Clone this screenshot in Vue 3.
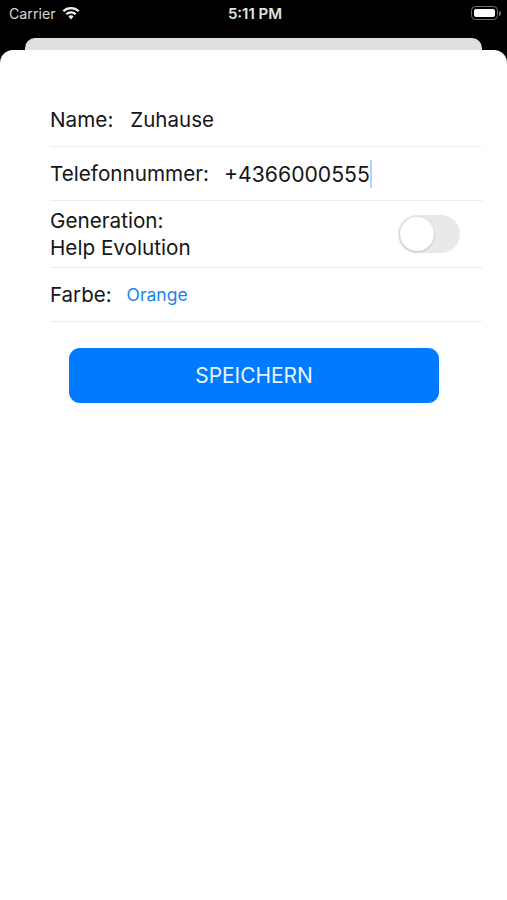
<script setup>
import { ref } from 'vue'
const rows = ref({ name: 'Zuhause', phone: '+4366000555', color: 'Orange' })
</script>

<template>
  <div class="screen">
    <header class="status">
      <div class="status-left">
        <span class="carrier">Carrier</span>
        <svg class="wifi" viewBox="0 0 18 14" width="18" height="14">
          <path d="M1.300 5.200a11 11 0 0 1 15.400 0" fill="none" stroke="#f2f2f2" stroke-width="2.200"/>
          <path d="M4.300 8.200a6.800 6.800 0 0 1 9.400 0" fill="none" stroke="#f2f2f2" stroke-width="2.200"/>
          <path d="M9 9.300c-1 0-1.900.4-2.600 1L9 13.400l2.600-3.100c-.7-.6-1.600-1-2.600-1z" fill="#f2f2f2"/>
        </svg>
      </div>
      <span class="time">5:11 PM</span>
      <div class="battery">
        <div class="battery-body"><div class="battery-fill"></div></div>
        <div class="battery-cap"></div>
      </div>
    </header>

    <div class="sheet-back"></div>

    <main class="sheet">
      <form class="form">
        <div class="row row-name">
          <span class="label">Name:</span>
          <span class="value value-name">{{ rows.name }}</span>
        </div>
        <div class="row row-phone">
          <span class="label">Telefonnummer:</span>
          <span class="value value-phone">{{ rows.phone }}<i class="caret"></i></span>
        </div>
        <div class="row row-toggle">
          <span class="label label-two">Generation:<br />Help Evolution</span>
          <div class="switch"><div class="knob"></div></div>
        </div>
        <div class="row row-color">
          <span class="label label-color">Farbe:</span>
          <span class="link">{{ rows.color }}</span>
        </div>
        <button class="save" type="button">SPEICHERN</button>
      </form>
    </main>
  </div>
</template>

<style>
html, body { margin: 0; background: #000; }
</style>

<style scoped>
.screen {
  width: 507px;
  height: 900px;
  background: #000;
  display: flex;
  flex-direction: column;
  overflow: hidden;
  font-family: Inter, "Liberation Sans", sans-serif;
  color: #111;
}
.status {
  height: 38px;
  flex: none;
  display: grid;
  grid-template-columns: 1fr auto 1fr;
  align-items: start;
  padding: 4px 6px 0 9px;
  box-sizing: border-box;
  color: #fff;
}
.status-left { display: flex; align-items: center; gap: 6px; height: 18px; }
.carrier { font-size: 14.200px; color: #d6d6d6; }
.wifi { margin-top: -1px; }
.time { font-size: 15px; font-weight: 600; color: #e4e4e4; line-height: 20px; }
.battery { justify-self: end; display: flex; align-items: center; height: 18px; gap: 1px; }
.battery-body {
  width: 27px; height: 14px; box-sizing: border-box;
  border: 1.500px solid #6f6f6f; border-radius: 4.500px; padding: 2px;
}
.battery-fill { width: 100%; height: 100%; background: #fff; border-radius: 2px; }
.battery-cap { width: 2px; height: 5px; background: #6f6f6f; border-radius: 0 2px 2px 0; }
.sheet-back {
  height: 12px;
  flex: none;
  margin: 0 25px;
  background: #dfdfdf;
  border-radius: 10px 10px 0 0;
}
.sheet {
  flex: 1;
  background: #fff;
  border-radius: 13px 13px 0 0;
  padding: 49px 25px 0 50px;
}
.form { display: flex; flex-direction: column; }
.row {
  display: flex;
  align-items: center;
  border-bottom: 1px solid #ececec;
  font-size: 20.700px;
  box-sizing: border-box;
  color: #161616;
}
.row-name { height: 48px; padding-bottom: 7px; }
.row-phone { height: 54px; }
.row-toggle { height: 67px; justify-content: space-between; padding-right: 22px; }
.row-color { height: 54px; }
.label-two { line-height: 27px; }
.label-color { font-size: 20.500px; }
.value-name { margin-left: 17px; font-size: 20.500px; }
.value-phone { margin-left: 15px; position: relative; font-size: 21.200px; }
.caret {
  position: absolute; right: -2px; top: -1px;
  width: 2px; height: 28px; background: #b5d5f7;
}
.switch {
  width: 62px; height: 38px; background: #e9e9ea; border-radius: 19px;
  padding: 2px; box-sizing: border-box;
}
.knob {
  width: 34px; height: 34px; border-radius: 50%; background: #fff;
  box-shadow: 0 1px 3px rgba(0,0,0,.18);
}
.link { color: #1c84ee; font-size: 17.500px; margin-left: 15px; }
.save {
  margin: 26px 0 0 19px;
  width: 370px;
  height: 55px;
  background: #007aff;
  color: #eaf4ff;
  border: none;
  border-radius: 11px;
  font: inherit;
  font-size: 20.900px;
}
</style>
